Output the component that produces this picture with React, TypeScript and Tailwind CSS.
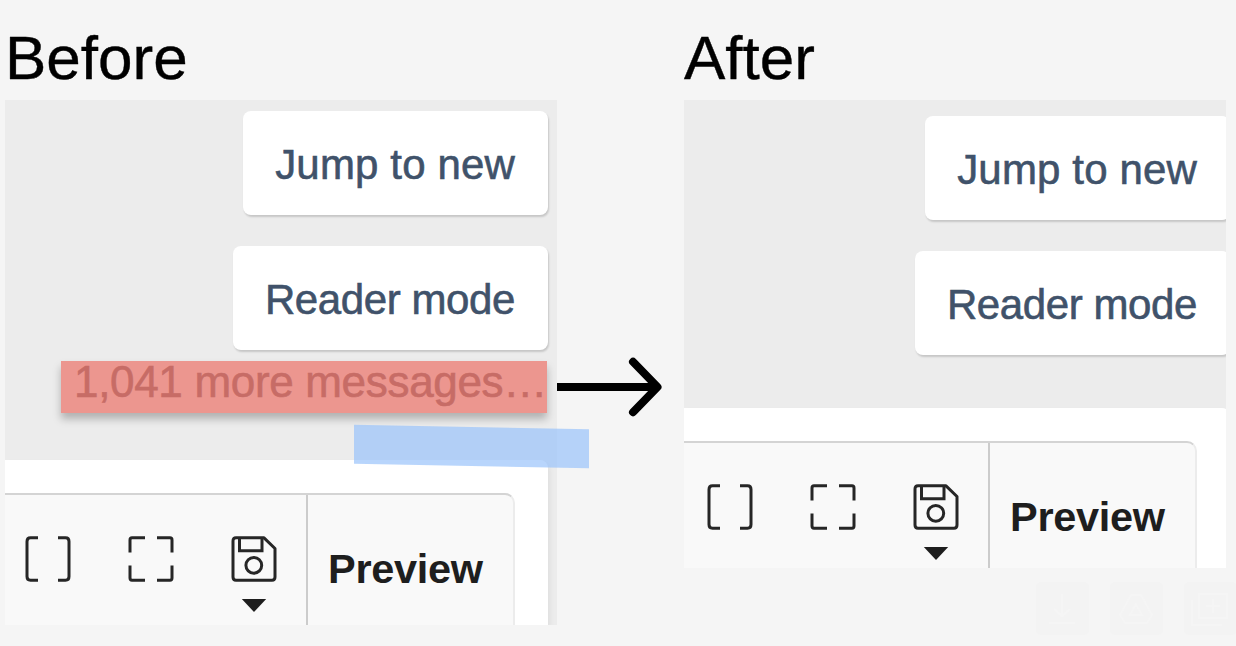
import type { ReactNode } from "react";

function BracketsIcon() {
  return (
    <svg width="46" height="46" viewBox="0 0 46 46" fill="none" stroke="#262626" strokeWidth="3" strokeLinecap="butt">
      <path d="M13 1.8H5.5Q2 1.8 2 5.5V40.5Q2 44.2 5.5 44.2H13" />
      <path d="M33 1.8H40.5Q44 1.8 44 5.5V40.5Q44 44.2 40.5 44.2H33" />
    </svg>
  );
}

function FullscreenIcon() {
  return (
    <svg width="46" height="46" viewBox="0 0 46 46" fill="none" stroke="#262626" strokeWidth="3">
      <path d="M17 1.8H4Q2 1.8 2 4V16.5" />
      <path d="M29 1.8H42Q44 1.8 44 4V16.5" />
      <path d="M17 44.2H4Q2 44.2 2 42V29.5" />
      <path d="M29 44.2H42Q44 44.2 44 42V29.5" />
    </svg>
  );
}

function SaveIcon() {
  return (
    <svg width="46" height="46" viewBox="0 0 46 46" fill="none" stroke="#262626" strokeWidth="3" strokeLinejoin="round">
      <path d="M5 1.8H33L44 12.5V41Q44 44.2 41 44.2H5Q2 44.2 2 41V5Q2 1.8 5 1.8Z" />
      <path d="M8.5 2V14.8H31V2" strokeLinejoin="miter" />
      <circle cx="22.8" cy="29.3" r="7.9" />
    </svg>
  );
}

function ActionButton({ size, children }: { size: string; children: ReactNode }) {
  return (
    <div
      className={`${size} flex h-[104px] shrink-0 items-center justify-end rounded-lg bg-white pt-[4px] pr-[33px] text-[42px] leading-none whitespace-nowrap text-[#40526a] shadow-[1px_2px_2px_rgba(0,0,0,0.16)] [-webkit-text-stroke:0.6px_#40526a]`}
    >
      {children}
    </div>
  );
}

function Actions() {
  return (
    <div className="flex flex-col items-end gap-[31px]">
      <ActionButton size="w-[305px] tracking-[0.15px]">Jump to new</ActionButton>
      <ActionButton size="w-[315px] tracking-[-0.4px]">Reader mode</ActionButton>
    </div>
  );
}

function Composer() {
  return (
    <div className="flex flex-1 justify-end rounded-tr-lg bg-white pt-[33px] pr-[33px] shadow-[2px_3px_5px_rgba(0,0,0,0.06)]">
      <div className="flex flex-1 justify-end rounded-tr-[10px] border-t-2 border-r-2 border-t-[#d4d4d4] border-r-[#ececec] bg-[#f9f9f9]">
        <div className="flex gap-[57px] border-r-2 border-[#cccccc] pt-[41px] pr-[29px]">
          <BracketsIcon />
          <FullscreenIcon />
          <div className="flex flex-col items-center gap-[17px]">
            <SaveIcon />
            <svg width="26" height="13" viewBox="0 0 26 13" fill="#1e1e1e">
              <path d="M0.8 0H25.2L13 13Z" />
            </svg>
          </div>
        </div>
        <div className="w-[205px] pt-[53px] pl-[20px] text-[41.5px] leading-[41px] font-bold tracking-[-0.3px] text-[#1e1e1e]">
          Preview
        </div>
      </div>
    </div>
  );
}

function Arrow() {
  return (
    <svg className="mt-[354px] shrink-0" width="127" height="66" viewBox="0 0 127 66" fill="none" stroke="#000" strokeWidth="8">
      <path d="M0 33H100" />
      <path d="M76 7.8L100.5 33L76 58.2" strokeLinecap="round" strokeLinejoin="round" />
    </svg>
  );
}

function FaintTools() {
  return (
    <div className="absolute top-[582px] left-[1036px] flex w-[200px] gap-[21px] overflow-hidden">
      <svg className="shrink-0" width="53" height="53" fill="none" stroke="#f5f5f5" strokeWidth="2">
        <rect width="53" height="53" rx="5" fill="#f3f3f3" stroke="none" />
        <path d="M26 12V33M18 27L26 34L34 27M13 41H39" />
      </svg>
      <svg className="shrink-0" width="53" height="53" fill="none" stroke="#f5f5f5" strokeWidth="2">
        <rect width="53" height="53" rx="5" fill="#f3f3f3" stroke="none" />
        <path d="M21 13H31L42 33L37 41H15L10 33ZM26 22L20 33H32Z" />
      </svg>
      <svg className="shrink-0" width="53" height="53" fill="none" stroke="#f5f5f5" strokeWidth="2">
        <rect width="53" height="53" rx="5" fill="#f3f3f3" stroke="none" />
        <path d="M15 12H43V36H15ZM8 18V43H38M29 17V31M22 24H36" />
      </svg>
    </div>
  );
}

export default function App() {
  return (
    <main className="relative flex h-[646px] w-[1236px] overflow-hidden bg-[#f5f5f5] pl-[5px] font-['Liberation_Sans',Arial,sans-serif]">
      <section className="flex w-[552px] shrink-0 flex-col">
        <h1 className="h-[100px] pt-[23px] text-[62px] leading-[70px] whitespace-nowrap text-black [-webkit-text-stroke:0.4px_#000]">Before</h1>
        <div className="flex h-[525px] flex-col overflow-hidden bg-[#ececec] pt-[11px] pr-[9px]">
          <Actions />
          <div className="mt-[11px] mr-px mb-[47px] h-[52px] w-[486px] shrink-0 self-end bg-[#ec968f] pl-[13px] text-[44px] leading-[42px] tracking-[-0.32px] whitespace-nowrap text-[#c76c66] shadow-[0_6px_8px_rgba(0,0,0,0.25)] [-webkit-text-stroke:0.6px_#c76c66]">
            1,041 more messages…
          </div>
          <Composer />
        </div>
      </section>
      <Arrow />
      <section className="flex w-[542px] shrink-0 flex-col">
        <h1 className="h-[100px] pt-[23px] text-[62px] leading-[70px] whitespace-nowrap text-black [-webkit-text-stroke:0.4px_#000]">After</h1>
        <div className="flex h-[468px] overflow-hidden bg-[#ececec]">
          <div className="flex w-[546px] shrink-0 flex-col gap-[53px] pt-[16px]">
            <Actions />
            <Composer />
          </div>
        </div>
      </section>
      <div className="absolute top-[427px] left-[354px] h-[39px] w-[235px] skew-y-[1.1deg] bg-[rgba(151,193,250,0.68)]" />
      <FaintTools />
    </main>
  );
}
